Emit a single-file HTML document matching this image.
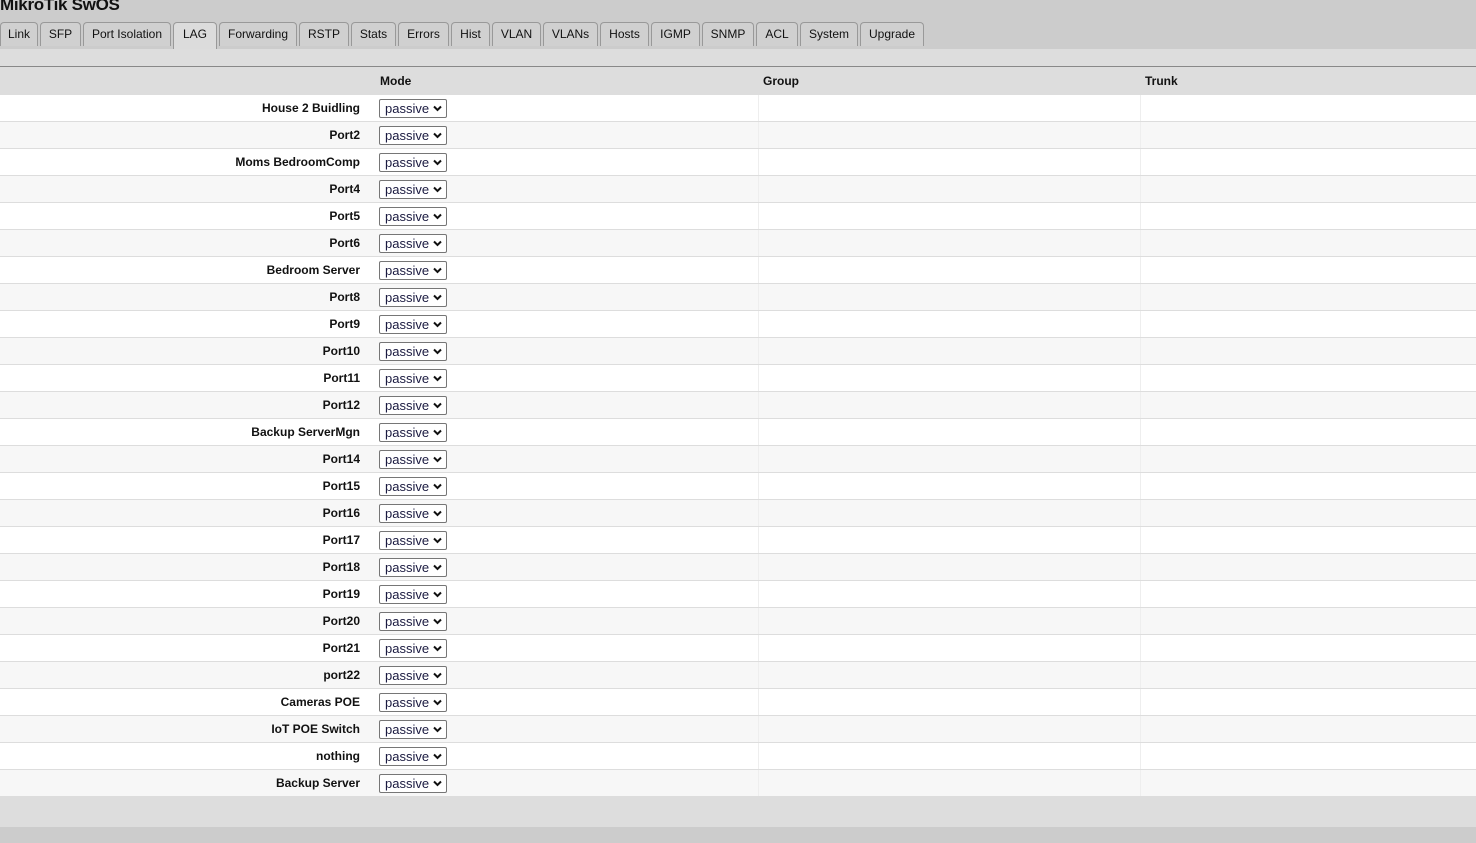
<!DOCTYPE html>
<html><head><meta charset="utf-8"><style>
*{margin:0;padding:0;box-sizing:border-box}
body{width:1476px;height:843px;overflow:hidden;background:#ccc;font-family:"Liberation Sans",Arial,sans-serif;position:relative}
.title{position:absolute;left:0;top:-5px;font-size:17px;font-weight:bold;color:#111;letter-spacing:-0.3px}
.tab{position:absolute;top:22px;height:24px;border:1px solid #999;border-bottom:none;border-radius:4px 4px 0 0;background:#d0d0d0;font-size:12px;color:#111;text-align:center;line-height:22px}
.tab.act{background:#dcdcdc;height:27px}
.band{position:absolute;left:0;top:49px;width:1476px;height:17px;background:#ddd}
.hl{position:absolute;left:0;top:66px;width:1476px;height:1px;background:#888}
.hdr{position:absolute;left:0;top:67px;width:1476px;height:28px;background:#ddd;font-size:12px;font-weight:bold;color:#111}
.hdr span{position:absolute;top:7px}
.row{position:absolute;left:0;width:1476px;height:27px;border-bottom:1px solid #ddd;font-size:12px;font-weight:bold;color:#111}
.row .l{position:absolute;right:1116px;top:6px;white-space:nowrap}
.row .s{position:absolute;left:379px;top:4px;width:68px;height:19px;border:1px solid #767676;border-radius:2px;background:#fff;font-weight:normal;font-size:13px;color:#1a1a40;padding-left:5px;line-height:17px}
.row .s svg{position:absolute;right:4px;top:5px}
.v1{position:absolute;left:758px;top:0;width:1px;height:26px;background:#eee}
.v2{position:absolute;left:1140px;top:0;width:1px;height:26px;background:#eee}
.foot{position:absolute;left:0;top:797px;width:1476px;height:30px;background:#ddd}
</style></head><body>
<div class="title">MikroTik SwOS</div>
<div class="tab" style="left:0;width:38px">Link</div>
<div class="tab" style="left:40px;width:41px">SFP</div>
<div class="tab" style="left:83px;width:88px">Port Isolation</div>
<div class="tab act" style="left:173px;width:44px">LAG</div>
<div class="tab" style="left:219px;width:78px">Forwarding</div>
<div class="tab" style="left:299px;width:50px">RSTP</div>
<div class="tab" style="left:351px;width:45px">Stats</div>
<div class="tab" style="left:398px;width:51px">Errors</div>
<div class="tab" style="left:451px;width:39px">Hist</div>
<div class="tab" style="left:492px;width:49px">VLAN</div>
<div class="tab" style="left:543px;width:55px">VLANs</div>
<div class="tab" style="left:600px;width:49px">Hosts</div>
<div class="tab" style="left:651px;width:49px">IGMP</div>
<div class="tab" style="left:702px;width:52px">SNMP</div>
<div class="tab" style="left:756px;width:42px">ACL</div>
<div class="tab" style="left:800px;width:58px">System</div>
<div class="tab" style="left:860px;width:64px">Upgrade</div>
<div class="band"></div>
<div class="hl"></div>
<div class="hdr"><span style="left:380px">Mode</span><span style="left:763px">Group</span><span style="left:1145px">Trunk</span></div>
<div id="rows"></div>
<div class="foot"></div>
<script>
var n=["House 2 Buidling","Port2","Moms BedroomComp","Port4","Port5","Port6","Bedroom Server","Port8","Port9","Port10","Port11","Port12","Backup ServerMgn","Port14","Port15","Port16","Port17","Port18","Port19","Port20","Port21","port22","Cameras POE","IoT POE Switch","nothing","Backup Server"];
var h="";
n.forEach(function(t,i){h+='<div class="row" style="top:'+(95+i*27)+'px;background:'+(i%2?'#f7f7f7':'#fff')+'"><span class="l">'+t+'</span><div class="s">passive<svg width="9" height="7" viewBox="0 0 9 7"><path d="M1 1.5L4.5 5L8 1.5" stroke="#111" stroke-width="2" fill="none"/></svg></div><div class="v1"></div><div class="v2"></div></div>';});
document.getElementById("rows").innerHTML=h;
</script>
</body></html>
